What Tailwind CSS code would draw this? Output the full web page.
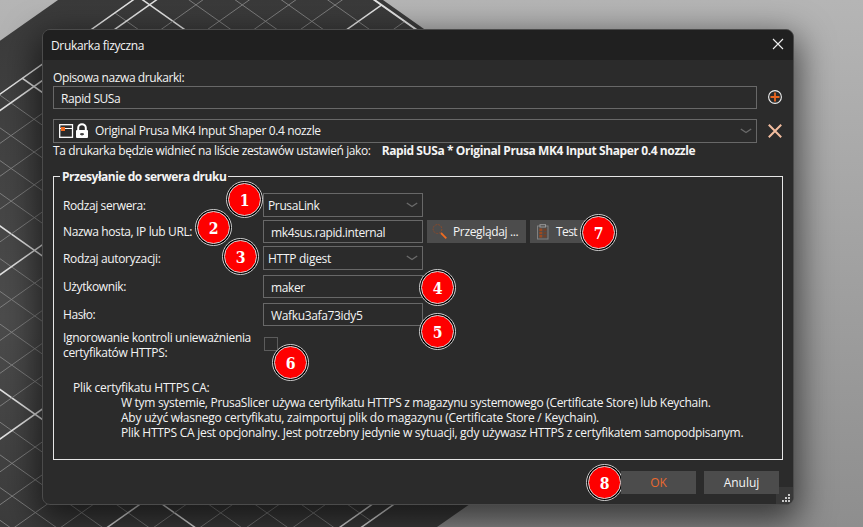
<!DOCTYPE html>
<html lang="pl">
<head>
<meta charset="utf-8">
<title>Drukarka fizyczna</title>
<script src="https://cdn.jsdelivr.net/npm/@tailwindcss/browser@4"></script>
</head>
<body class="relative w-[863px] h-[527px] overflow-hidden bg-linear-to-b from-[#b5b5b5] to-[#8e8e8e] font-['Open_Sans','Noto_Sans',sans-serif] text-[12px] leading-[15px] text-[#f4f4f4]">
<!-- print bed -->
<svg class="absolute inset-0" width="863" height="527" viewBox="0 0 863 527">
  <defs>
    <linearGradient id="bed" x1="0" y1="0" x2="0" y2="1"><stop offset="0" stop-color="#3a3a3a"/><stop offset=".6" stop-color="#4c4c4c"/><stop offset="1" stop-color="#3c3c3c"/></linearGradient>
    <clipPath id="plate"><polygon points="254,-85.5 741,259 -50,818 -50,129"/></clipPath>
  </defs>
  <polygon points="-50,76 58,0 383,0 700,224 700,341 470,504 437,527 -50,527" fill="url(#bed)"/>
  <g id="grid" clip-path="url(#plate)" fill="none"></g>
  <path d="M-50 129.4L254 -85.5L741 259L-50 818" fill="none" stroke="#e4e4e4" stroke-width="1.5"/>
</svg>

<main class="absolute left-[42px] top-[29px] w-[752px] h-[476px] rounded-[8px] border border-[#4b4b4b] bg-[#2b2b2b] shadow-[0_12px_34px_5px_rgba(0,0,0,0.6)]">
  <header class="h-[30px] rounded-t-[7px] bg-[#202020] flex items-center justify-between pl-2 pr-[9px]">
    <h1 class="tracking-[-0.35px]">Drukarka fizyczna</h1>
    <svg width="12" height="12" viewBox="0 0 12 12" class="-mt-0.5" stroke="#f0f0f0" stroke-width="1.1"><path d="M1 1L11 11M11 1L1 11"/></svg>
  </header>

  <div class="px-[10px] pt-[10px]">
    <div class="h-[16px] tracking-[-0.4px]">Opisowa nazwa drukarki:</div>
    <div class="flex items-center gap-[11px]">
      <div class="w-[704px] h-[23px] border border-[#686868] px-[7px] flex items-center pt-px tracking-[-0.42px]">Rapid SUSa</div>
      <svg width="14" height="14" viewBox="0 0 14 14" fill="none" class="-mt-px"><circle cx="7" cy="7" r="6.4" stroke="#eee" stroke-width="1.1"/><path d="M7 2.5V11.5M2.5 7H11.5" stroke="#e8641e" stroke-width="1.8"/></svg>
    </div>
    <div class="flex items-center gap-[11px] mt-[10px]">
      <div class="w-[704px] h-[24px] border border-[#686868] pl-[5px] pr-1 flex items-center tracking-[-0.37px]">
        <svg width="30" height="16" viewBox="0 0 30 16" fill="none"><rect x=".7" y="1.7" width="12.8" height="12.6" stroke="#fff" stroke-width="1.3"/><path d="M1 5.5H13.5" stroke="#fff"/><rect x="2" y="4" width="4" height="4" fill="#f0681e"/><path d="M19.2 8V4.8a3.8 3.6 0 0 1 7.6 0V8" stroke="#fff" stroke-width="2"/><rect x="17" y="7" width="12" height="8" rx="1" fill="#fff"/><path d="M21 11.2H25M23 10V12.6" stroke="#2b2b2b" stroke-width="1.2"/></svg>
        <span class="ml-[6px] flex-1 -mt-px">Original Prusa MK4 Input Shaper 0.4 nozzle</span>
        <svg width="12" height="6" viewBox="0 0 12 6" fill="none" stroke="#6a6a6a" stroke-width="1.4"><path d="M.8 1L6 4.5L11.2 1"/></svg>
      </div>
      <svg width="14" height="14" viewBox="0 0 14 14" stroke="#f3bd9f" stroke-width="2"><path d="M.8 .8L13.2 13.2M13.2 .8L.8 13.2"/></svg>
    </div>
    <div class="flex gap-[11px] h-[15px]">
      <span class="tracking-[-0.39px]">Ta drukarka będzie widnieć na liście zestawów ustawień jako:</span>
      <b class="tracking-[-0.4px]">Rapid SUSa * Original Prusa MK4 Input Shaper 0.4 nozzle</b>
    </div>

    <section class="relative mt-[18px] w-[730px] h-[284px] border border-[#e6e6e6] pl-[9px] pt-[16px]">
      <h2 class="absolute left-[6px] -top-[8px] bg-[#2b2b2b] px-[2px] font-bold tracking-[-0.47px] whitespace-nowrap">Przesyłanie do serwera druku</h2>
      <div class="flex items-center h-[24px]">
        <span class="w-[200px] tracking-[-0.4px]">Rodzaj serwera:</span>
        <div class="w-[160px] h-[24px] border border-[#686868] px-1 flex items-center justify-between"><span class="tracking-[-0.37px]">PrusaLink</span><svg width="12" height="6" viewBox="0 0 12 6" fill="none" stroke="#6a6a6a" stroke-width="1.4"><path d="M.8 1L6 4.5L11.2 1"/></svg></div>
      </div>
      <div class="flex items-center h-[23px] mt-[3px]">
        <span class="w-[200px] tracking-[-0.37px]">Nazwa hosta, IP lub URL:</span>
        <div class="w-[160px] h-[23px] border border-[#686868] px-[7px] flex items-center pt-px tracking-[-0.37px]">mk4sus.rapid.internal</div>
        <button class="ml-1 w-[99px] h-[23px] bg-[#4c4c4c] flex items-center pl-[5px]"><svg width="16" height="16" viewBox="0 0 16 16" fill="none"><circle cx="5.5" cy="5" r="4.4" stroke="#8c4a29" stroke-dasharray="2 1"/><path d="M9 9L14.3 14.3" stroke="#ed6b21" stroke-width="1.8"/></svg><span class="ml-[5px] tracking-[-0.35px]">Przeglądaj ...</span></button>
        <button class="ml-1 w-[74px] h-[23px] bg-[#4c4c4c] flex items-center pl-[6px]"><svg width="14" height="16" viewBox="0 0 14 16" fill="none"><rect x="1.5" y="2" width="10.5" height="13" stroke="#808080"/><rect x="4" y=".7" width="5.5" height="2.3" fill="#4c4c4c" stroke="#999"/><path d="M4.8 4.5V13.5" stroke="#9c4a20" stroke-width="3" stroke-dasharray="2.5 .7"/><path d="M9 4.5V13.5" stroke="#70412a" stroke-width="3" stroke-dasharray="2.5 .7"/></svg><span class="ml-[6px] tracking-[-0.6px]">Test</span></button>
      </div>
      <div class="flex items-center h-[24px] mt-[3px]">
        <span class="w-[200px] tracking-[-0.35px]">Rodzaj autoryzacji:</span>
        <div class="w-[160px] h-[24px] border border-[#686868] px-1 flex items-center justify-between"><span class="tracking-[-0.27px]">HTTP digest</span><svg width="12" height="6" viewBox="0 0 12 6" fill="none" stroke="#6a6a6a" stroke-width="1.4"><path d="M.8 1L6 4.5L11.2 1"/></svg></div>
      </div>
      <div class="flex items-center h-[23px] mt-[5px]">
        <span class="w-[200px] tracking-[-0.4px]">Użytkownik:</span>
        <div class="w-[160px] h-[23px] border border-[#686868] px-[7px] flex items-center pt-px tracking-[-0.37px]">maker</div>
      </div>
      <div class="flex items-center h-[23px] mt-[5px]">
        <span class="w-[200px] tracking-[-0.4px]">Hasło:</span>
        <div class="w-[160px] h-[23px] border border-[#686868] px-[7px] flex items-center pt-px tracking-[-0.35px]">Wafku3afa73idy5</div>
      </div>
      <div class="flex items-start mt-[4px] h-[30px]">
        <span class="w-[201px] tracking-[-0.34px]">Ignorowanie kontroli unieważnienia<br>certyfikatów HTTPS:</span>
        <span class="mt-[7px] size-[14px] border border-[#5c5c5c]"></span>
      </div>
      <div class="mt-[20px] ml-[10px] tracking-[-0.23px]">Plik certyfikatu HTTPS CA:
        <div class="pl-[48px] whitespace-nowrap"><span class="tracking-[-0.3px]">W tym systemie, PrusaSlicer używa certyfikatu HTTPS z magazynu systemowego (Certificate Store) lub Keychain.</span><br>Aby użyć własnego certyfikatu, zaimportuj plik do magazynu (Certificate Store / Keychain).<br><span class="tracking-[-0.27px]">Plik HTTPS CA jest opcjonalny. Jest potrzebny jedynie w sytuacji, gdy używasz HTTPS z certyfikatem samopodpisanym.</span></div>
      </div>
    </section>
    <div class="flex justify-end gap-2 mt-[11px] pr-1 relative z-10">
      <button class="w-[75px] h-[23px] bg-[#4c4c4c] text-[#e8692f]">OK</button>
      <button class="w-[75px] h-[23px] bg-[#4c4c4c]">Anuluj</button>
    </div>
  </div>
  <svg class="absolute right-0 bottom-0" width="17" height="17" viewBox="0 0 17 17"><path d="M0 0H17V10Q17 17 10 17H0Z" fill="#383838"/><path d="M12 7h2v2h-2zM9 10h2v2h-2zM12 10h2v2h-2zM6 13h2v2h-2zM9 13h2v2h-2zM12 13h2v2h-2z" fill="#c8c8c8"/></svg>
</main>

<!-- numbered callouts -->
<div id="pins" class="font-['DejaVu_Serif',serif] font-bold text-[16px] text-white"></div>
<template id="pin"><div class="absolute size-[37px] -ml-[19px] -mt-[19px] rounded-full border border-[#d0d0d0] bg-black p-[1px]"><div class="size-full rounded-full border border-[#d8d8d8] bg-[#fe0000] flex items-center justify-center pt-[2px]"><span class="inline-block scale-x-[0.88]"></span></div></div></template>
<script>
const g = document.getElementById('grid');
function line(x1, y1, x2, y2, major) {
  const l = document.createElementNS('http://www.w3.org/2000/svg', 'line');
  Object.entries({x1, y1, x2, y2, stroke: major ? '#e2e2e2' : '#858585', 'stroke-width': major ? 1.5 : 0.9}).forEach(([k, v]) => l.setAttribute(k, v));
  g.appendChild(l);
}
const S = 0.707;
for (let k = 0; k < 32; k++) {
  const c = -264.5 + 32.7 * k;
  line(-50, c - 50 * S, 863, c + 863 * S, k % 5 === 0);
}
for (let k = 0; k < 21; k++) {
  const d = 110.5 + 32.85 * k;
  line(-50, d + 50 * S, 863, d - 863 * S, k % 5 === 0);
}
[[245,200],[214,228],[241,257],[438,288],[438,332],[291,363],[599,233],[605,483]].forEach(([x, y], i) => {
  const n = document.getElementById('pin').content.cloneNode(true);
  n.firstChild.style.left = x + 'px';
  n.firstChild.style.top = y + 'px';
  n.querySelector('span').textContent = i + 1;
  document.getElementById('pins').appendChild(n);
});
</script>
</body>
</html>
